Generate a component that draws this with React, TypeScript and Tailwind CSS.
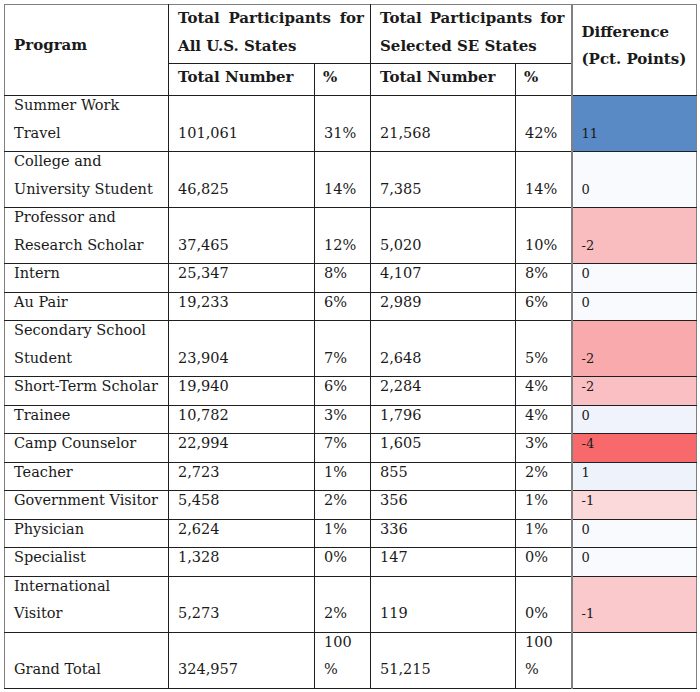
type Row = {
  name: string[]
  all: string
  allPct: string[]
  se: string
  sePct: string[]
  diff: string
  bg: string
}

const rows: Row[] = [
  { name: ["Summer Work", "Travel"], all: "101,061", allPct: ["31%"], se: "21,568", sePct: ["42%"], diff: "11", bg: "bg-[#5a8ac6]" },
  { name: ["College and", "University Student"], all: "46,825", allPct: ["14%"], se: "7,385", sePct: ["14%"], diff: "0", bg: "bg-[#f9fafe]" },
  { name: ["Professor and", "Research Scholar"], all: "37,465", allPct: ["12%"], se: "5,020", sePct: ["10%"], diff: "-2", bg: "bg-[#f9bcbf]" },
  { name: ["Intern"], all: "25,347", allPct: ["8%"], se: "4,107", sePct: ["8%"], diff: "0", bg: "bg-[#f9fafe]" },
  { name: ["Au Pair"], all: "19,233", allPct: ["6%"], se: "2,989", sePct: ["6%"], diff: "0", bg: "bg-[#f9fafe]" },
  { name: ["Secondary School", "Student"], all: "23,904", allPct: ["7%"], se: "2,648", sePct: ["5%"], diff: "-2", bg: "bg-[#f8aaad]" },
  { name: ["Short-Term Scholar"], all: "19,940", allPct: ["6%"], se: "2,284", sePct: ["4%"], diff: "-2", bg: "bg-[#f9bfc2]" },
  { name: ["Trainee"], all: "10,782", allPct: ["3%"], se: "1,796", sePct: ["4%"], diff: "0", bg: "bg-[#f0f3fb]" },
  { name: ["Camp Counselor"], all: "22,994", allPct: ["7%"], se: "1,605", sePct: ["3%"], diff: "-4", bg: "bg-[#f8696b]" },
  { name: ["Teacher"], all: "2,723", allPct: ["1%"], se: "855", sePct: ["2%"], diff: "1", bg: "bg-[#eef2fa]" },
  { name: ["Government Visitor"], all: "5,458", allPct: ["2%"], se: "356", sePct: ["1%"], diff: "-1", bg: "bg-[#fbd8da]" },
  { name: ["Physician"], all: "2,624", allPct: ["1%"], se: "336", sePct: ["1%"], diff: "0", bg: "bg-[#f9fafe]" },
  { name: ["Specialist"], all: "1,328", allPct: ["0%"], se: "147", sePct: ["0%"], diff: "0", bg: "bg-[#f9fafe]" },
  { name: ["International", "Visitor"], all: "5,273", allPct: ["2%"], se: "119", sePct: ["0%"], diff: "-1", bg: "bg-[#f9c9cc]" },
  { name: ["Grand Total"], all: "324,957", allPct: ["100", "%"], se: "51,215", sePct: ["100", "%"], diff: "", bg: "bg-white" },
]

function Lines({ lines }: { lines: string[] }) {
  return (
    <div className="-mt-1 mb-1">
      {lines.map((l, i) => (
        <div key={i} className="whitespace-nowrap">{l}</div>
      ))}
    </div>
  )
}

const cell = "border border-[#1f1f1f] align-bottom pl-[9px] pr-1 py-0"

export default function App() {
  return (
    <div className="bg-white w-[700px] h-[692px] pt-[4px] pl-[4px] text-[#1a1a1a] font-['DejaVu_Serif',serif] text-[14.5px] leading-[27.5px]">
      <table className="border-collapse table-fixed w-[692px]">
        <colgroup>
          <col className="w-[164px]" />
          <col className="w-[146px]" />
          <col className="w-[56px]" />
          <col className="w-[145px]" />
          <col className="w-[56px]" />
          <col className="w-[125px]" />
        </colgroup>
        <thead className="font-bold text-[15px]">
          <tr className="h-[59px]">
            <th rowSpan={2} className="border border-[#1f1f1f] border-l-[#808080] border-t-[#808080] text-left align-middle pl-[9px]">
              <div className="-mt-1 mb-1">Program</div>
            </th>
            <th colSpan={2} className="border border-[#1f1f1f] border-t-[#808080] text-left align-top pl-[9px] pr-[6px]">
              <div>
                <div className="flex justify-between">
                  <span>Total</span>
                  <span>Participants</span>
                  <span>for</span>
                </div>
                <div>All U.S. States</div>
              </div>
            </th>
            <th colSpan={2} className="border border-[#1f1f1f] border-t-[#808080] text-left align-top pl-[9px] pr-[6px]">
              <div>
                <div className="flex justify-between">
                  <span>Total</span>
                  <span>Participants</span>
                  <span>for</span>
                </div>
                <div>Selected SE States</div>
              </div>
            </th>
            <th rowSpan={2} className="border border-[#1f1f1f] border-l-[#808080] border-l-2 border-t-[#808080] border-r-[#808080] text-left align-middle pl-[9px]">
              <div className="-mt-1 mb-1">
                <div>Difference</div>
                <div>(Pct. Points)</div>
              </div>
            </th>
          </tr>
          <tr className="h-[32px]">
            <th className="border border-[#1f1f1f] text-left align-top pl-[9px]"><div>Total Number</div></th>
            <th className="border border-[#1f1f1f] text-left align-top pl-[8px]"><div>%</div></th>
            <th className="border border-[#1f1f1f] text-left align-top pl-[9px]"><div>Total Number</div></th>
            <th className="border border-[#1f1f1f] text-left align-top pl-[8px]"><div>%</div></th>
          </tr>
        </thead>
        <tbody>
          {rows.map((r) => (
            <tr key={r.name.join(" ")}>
              <td className={`${cell} border-l-[#808080]`}><Lines lines={r.name} /></td>
              <td className={cell}><Lines lines={[r.all]} /></td>
              <td className={`${cell} pl-[8px]`}><Lines lines={r.allPct} /></td>
              <td className={cell}><Lines lines={[r.se]} /></td>
              <td className={`${cell} pl-[8px]`}><Lines lines={r.sePct} /></td>
              <td className={`${cell} ${r.bg} border-l-2 border-l-[#808080] border-r-[#808080] text-[13px]`}>
                <Lines lines={[r.diff || "\u00a0"]} />
              </td>
            </tr>
          ))}
        </tbody>
      </table>
    </div>
  )
}
